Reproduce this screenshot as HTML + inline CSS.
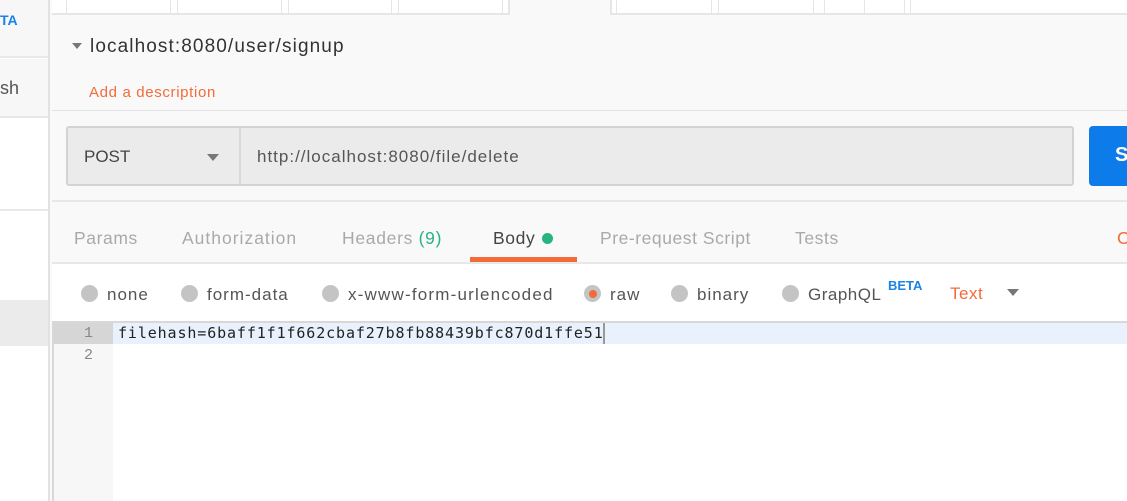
<!DOCTYPE html>
<html><head><meta charset="utf-8"><style>
*{margin:0;padding:0;box-sizing:border-box}
body{width:1127px;height:501px;overflow:hidden;background:#f9f9f9;font-family:"Liberation Sans",sans-serif;position:relative}
.a{position:absolute}
.t{font-size:17.5px;color:#a9a9a9;top:228px;letter-spacing:0.6px}
.r{position:absolute;top:285px;width:17px;height:17px;border-radius:50%;background:#c4c4c4}
.rl{position:absolute;top:285px;font-size:17px;color:#555;letter-spacing:1px}
</style></head><body>
<div class="a" style="left:0;top:0;width:50px;height:501px;background:#fff;border-right:2px solid #e2e2e2"></div>
<div class="a" style="left:0;top:0;width:48px;height:58px;background:#f7f7f7;border-bottom:2px solid #e8e8e8"></div>
<div class="a" style="left:0;top:12px;font-size:14px;color:#1a83e6;font-weight:bold">TA</div>
<div class="a" style="left:0;top:59px;width:48px;height:59px;background:#f7f7f7;border-bottom:2px solid #e8e8e8"></div>
<div class="a" style="left:0;top:78px;font-size:18px;color:#555">sh</div>
<div class="a" style="left:0;top:209px;width:48px;height:2px;background:#e8e8e8"></div>
<div class="a" style="left:0;top:300px;width:48px;height:46px;background:#ebebeb"></div>
<div class="a" style="left:52px;top:0;width:458px;height:15px;background:#fff;border-bottom:2px solid #e6e6e6;border-right:2px solid #e6e6e6"></div>
<div class="a" style="left:610px;top:0;width:517px;height:15px;background:#fff;border-bottom:2px solid #e6e6e6;border-left:2px solid #e6e6e6"></div>
<div class="a" style="left:66px;top:0;width:1px;height:15px;background:#e6e6e6"></div>
<div class="a" style="left:170px;top:0;width:8px;height:15px;border-left:1px solid #e6e6e6;border-right:1px solid #e6e6e6"></div>
<div class="a" style="left:281px;top:0;width:8px;height:15px;border-left:1px solid #e6e6e6;border-right:1px solid #e6e6e6"></div>
<div class="a" style="left:391px;top:0;width:8px;height:15px;border-left:1px solid #e6e6e6;border-right:1px solid #e6e6e6"></div>
<div class="a" style="left:502px;top:0;width:6px;height:15px;border-left:1px solid #e6e6e6"></div>
<div class="a" style="left:616px;top:0;width:1px;height:15px;background:#e6e6e6"></div>
<div class="a" style="left:711px;top:0;width:8px;height:15px;border-left:1px solid #e6e6e6;border-right:1px solid #e6e6e6"></div>
<div class="a" style="left:813px;top:0;width:12px;height:15px;border-left:1px solid #e6e6e6;border-right:1px solid #e6e6e6"></div>
<div class="a" style="left:864px;top:0;width:1px;height:15px;background:#e6e6e6"></div>
<div class="a" style="left:904px;top:0;width:7px;height:15px;border-left:1px solid #e6e6e6;border-right:1px solid #e6e6e6"></div>
<div class="a" style="left:72px;top:43px;width:0;height:0;border-left:5px solid transparent;border-right:5px solid transparent;border-top:6px solid #777"></div>
<div class="a" style="left:90px;top:36px;font-size:19px;color:#333;letter-spacing:1.1px">localhost:8080/user/signup</div>
<div class="a" style="left:89px;top:84px;font-size:15px;color:#f26b3a;letter-spacing:0.65px">Add a description</div>
<div class="a" style="left:52px;top:110px;width:1075px;height:1px;background:#e3e3e3"></div>
<div class="a" style="left:66px;top:126px;width:1008px;height:60px;background:#ebebeb;border:2px solid #d3d3d3;border-radius:3px"></div>
<div class="a" style="left:239px;top:128px;width:2px;height:56px;background:#d8d8d8"></div>
<div class="a" style="left:84px;top:147px;font-size:17px;color:#444">POST</div>
<div class="a" style="left:207px;top:154px;width:0;height:0;border-left:6px solid transparent;border-right:6px solid transparent;border-top:7px solid #777"></div>
<div class="a" style="left:257px;top:147px;font-size:17px;color:#555;letter-spacing:1px">http://localhost:8080/file/delete</div>
<div class="a" style="left:1089px;top:126px;width:60px;height:60px;background:#0d7be9;border-radius:4px"></div>
<div class="a" style="left:1115px;top:144px;font-size:20px;color:#fff;font-weight:bold">S</div>
<div class="a" style="left:52px;top:200px;width:1075px;height:2px;background:#e8e8e8"></div>
<div class="a t" style="left:74px">Params</div>
<div class="a t" style="left:182px;letter-spacing:1px">Authorization</div>
<div class="a t" style="left:342px;letter-spacing:0.7px">Headers <span style="color:#26b47f">(9)</span></div>
<div class="a t" style="left:493px;color:#444">Body</div>
<div class="a" style="left:542px;top:233px;width:11px;height:11px;border-radius:50%;background:#26b47f"></div>
<div class="a t" style="left:600px;letter-spacing:0.55px">Pre-request Script</div>
<div class="a t" style="left:795px">Tests</div>
<div class="a t" style="left:1117px;color:#f26b3a">C</div>
<div class="a" style="left:470px;top:257px;width:107px;height:5px;background:#f26b3a"></div>
<div class="a" style="left:52px;top:262px;width:1075px;height:2px;background:#e8e8e8"></div>
<div class="a" style="left:52px;top:264px;width:1075px;height:237px;background:#fff"></div>
<div class="r" style="left:81px"></div><div class="rl" style="left:107px">none</div>
<div class="r" style="left:181px"></div><div class="rl" style="left:207px">form-data</div>
<div class="r" style="left:322px"></div><div class="rl" style="left:348px;letter-spacing:1.2px">x-www-form-urlencoded</div>
<div class="r" style="left:584px"></div><div class="a" style="left:589px;top:290px;width:8px;height:8px;border-radius:50%;background:#f26b3a"></div><div class="rl" style="left:610px">raw</div>
<div class="r" style="left:671px"></div><div class="rl" style="left:697px">binary</div>
<div class="r" style="left:782px"></div><div class="rl" style="left:808px;letter-spacing:0.5px">GraphQL</div>
<div class="a" style="left:888px;top:278px;font-size:13px;color:#1a83e6;font-weight:bold">BETA</div>
<div class="a" style="left:950px;top:284px;font-size:17px;color:#f26b3a;letter-spacing:0.5px">Text</div>
<div class="a" style="left:1007px;top:289px;width:0;height:0;border-left:6px solid transparent;border-right:6px solid transparent;border-top:7px solid #777"></div>
<div class="a" style="left:52px;top:321px;width:1075px;height:180px;border-top:2px solid #d8d8d8;border-left:2px solid #d8d8d8;background:#fff"></div>
<div class="a" style="left:54px;top:323px;width:59px;height:178px;background:#f7f7f7"></div>
<div class="a" style="left:54px;top:323px;width:59px;height:21px;background:#d6d6d6"></div>
<div class="a" style="left:113px;top:323px;width:1014px;height:21px;background:#e8f1fc"></div>
<div class="a" style="left:84px;top:325px;font-family:'Liberation Mono',monospace;font-size:15px;color:#888">1</div>
<div class="a" style="left:84px;top:347px;font-family:'Liberation Mono',monospace;font-size:15px;color:#888">2</div>
<div class="a" style="left:118px;top:324px;font-family:'DejaVu Sans Mono',monospace;font-size:15px;color:#222;letter-spacing:0.88px;white-space:nowrap">filehash=6baff1f1f662cbaf27b8fb88439bfc870d1ffe51</div>
<div class="a" style="left:603px;top:323px;width:2px;height:21px;background:#999"></div>
</body></html>
